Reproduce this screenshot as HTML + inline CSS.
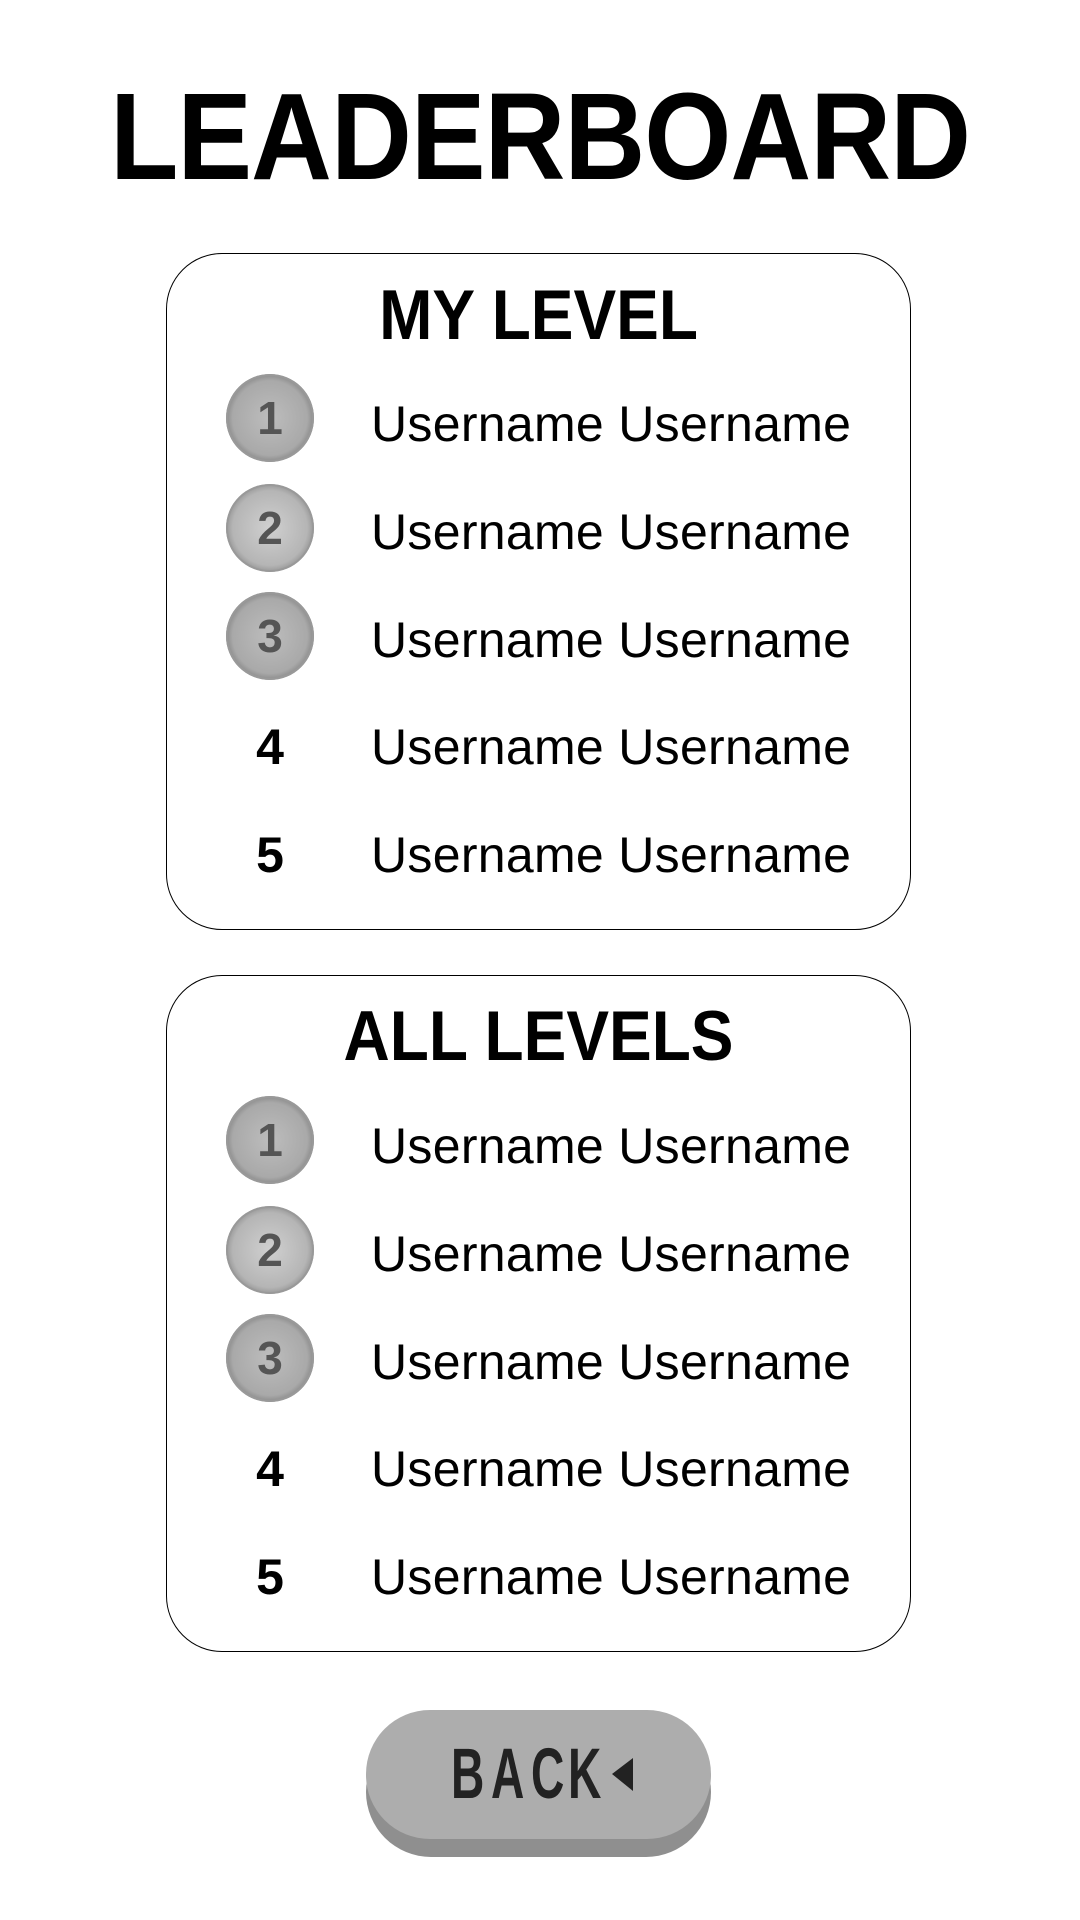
<!DOCTYPE html>
<html><head><meta charset="utf-8"><style>
html,body{margin:0;padding:0;background:#fff;width:1080px;height:1920px;overflow:hidden;font-family:"Liberation Sans",sans-serif;color:#000}
.abs{position:absolute}
h1{position:absolute;left:0;width:1080px;top:72px;margin:0;text-align:center;font-size:112px;font-weight:bold;letter-spacing:-1px;line-height:130px;transform:scaleY(1.1)}
.box{position:absolute;left:166px;width:743px;border:1.5px solid #000;border-radius:56px}
.ttl{position:absolute;left:0;width:100%;text-align:center;font-weight:bold;font-size:64px;line-height:80px;transform:scaleY(1.1)}
.name{position:absolute;left:204px;font-size:50px;line-height:60px;white-space:nowrap;letter-spacing:0.3px}
.medal{position:absolute;left:59px;width:88px;height:88px;border-radius:50%;
 background:radial-gradient(circle at 50% 50%,#bdbdbd 0,#a9a9a9 60%,#8d8d8d 70%,#dcdcdc 74%,#6f6f6f 100%);
 box-shadow:inset 0 0 0 2px #999;}
.medal span{position:absolute;left:0;top:0;width:88px;line-height:88px;text-align:center;font-size:46px;font-weight:bold;color:#555}
.num{position:absolute;left:59px;width:88px;text-align:center;font-weight:bold;font-size:50px;line-height:60px}
.bl{position:absolute;top:1738px;font-weight:bold;font-size:71px;line-height:74px;color:#222;transform:scaleX(0.65);transform-origin:0 0}
</style></head><body>
<h1>LEADERBOARD</h1>

<div class="box" style="top:253px;height:675px">
 <div class="ttl" style="top:21px">MY LEVEL</div>
 <div class="medal" style="top:120px"><span>1</span></div>
 <div class="medal" style="top:230px;background:radial-gradient(circle,#d0d0d0 0,#b5b5b5 60%,#9a9a9a 70%,#e5e5e5 74%,#7a7a7a 100%)"><span>2</span></div>
 <div class="medal" style="top:338px"><span>3</span></div>
 <div class="num" style="top:463px">4</div>
 <div class="num" style="top:571px">5</div>
 <div class="name" style="top:140px">Username Username</div>
 <div class="name" style="top:248px">Username Username</div>
 <div class="name" style="top:356px">Username Username</div>
 <div class="name" style="top:463px">Username Username</div>
 <div class="name" style="top:571px">Username Username</div>
</div>

<div class="box" style="top:975px;height:675px">
 <div class="ttl" style="top:20px">ALL LEVELS</div>
 <div class="medal" style="top:120px"><span>1</span></div>
 <div class="medal" style="top:230px;background:radial-gradient(circle,#d0d0d0 0,#b5b5b5 60%,#9a9a9a 70%,#e5e5e5 74%,#7a7a7a 100%)"><span>2</span></div>
 <div class="medal" style="top:338px"><span>3</span></div>
 <div class="num" style="top:463px">4</div>
 <div class="num" style="top:571px">5</div>
 <div class="name" style="top:140px">Username Username</div>
 <div class="name" style="top:248px">Username Username</div>
 <div class="name" style="top:356px">Username Username</div>
 <div class="name" style="top:463px">Username Username</div>
 <div class="name" style="top:571px">Username Username</div>
</div>

<div class="abs" style="left:366px;top:1727px;width:345px;height:130px;border-radius:65px;background:#8f8f8f"></div>
<div class="abs" style="left:366px;top:1710px;width:345px;height:129px;border-radius:64px;background:#adadad"></div>
<div class="bl" style="left:451px">B</div>
<div class="bl" style="left:491px">A</div>
<div class="bl" style="left:531px">C</div>
<div class="bl" style="left:568px">K</div>
<svg class="abs" style="left:612px;top:1758px" width="22" height="34"><polygon points="21,0 21,33 0,16" fill="#222"/></svg>
</body></html>
